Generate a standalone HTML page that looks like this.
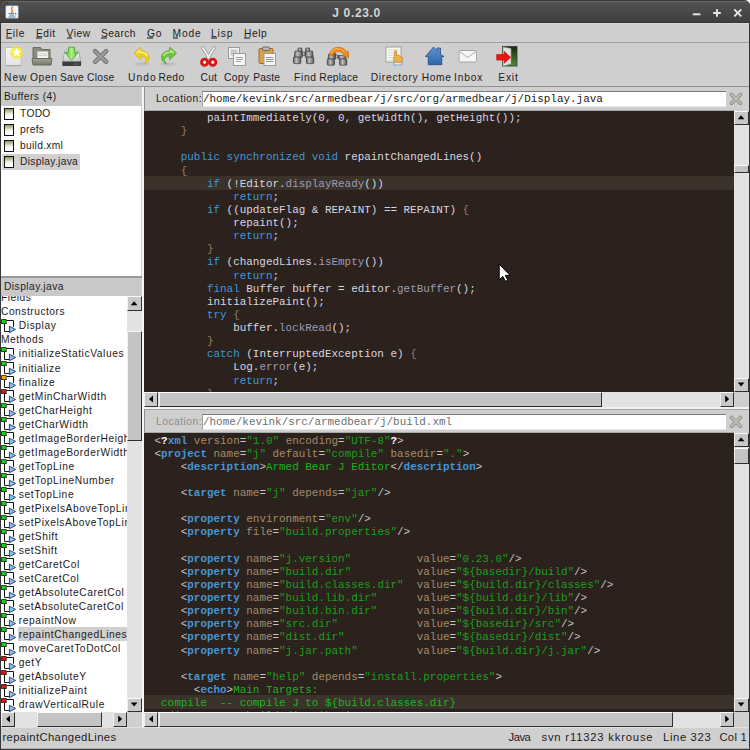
<!DOCTYPE html><html><head><meta charset="utf-8"><style>
*{margin:0;padding:0;box-sizing:border-box}
html,body{width:750px;height:750px;overflow:hidden;background:#fff}
.a{position:absolute}
.ui{font-family:'Liberation Sans',sans-serif; font-size:10.25px;color:#1e1a22;white-space:nowrap;line-height:1}
.cl{position:absolute;left:0;font-family:'Liberation Mono',monospace; font-size:10.9375px;line-height:13.125px;white-space:pre;height:13.125px}
</style></head><body>
<div class="a" style="left:0;top:0;width:750px;height:750px;background:#383838;border-radius:0 6px 0 0"></div><div class="a" style="left:0;top:0;width:750px;height:23px;background:linear-gradient(#3a3a3a 0,#3a3a3a 1px,#6a6a6a 1px,#6a6a6a 2px,#525252 2px,#3f3f3f 22px,#353535 22px);border-radius:0 6px 0 0"></div><div class="a" style="left:0px;top:0px;width:8px;height:8px;background:#454545;"></div><svg class="a" style="left:0;top:0" width="10" height="10"><path d="M0 0h10v1h-10z" fill="#3a3a3a"/><path d="M2.3 6.5Q2.6 1.6 6.5 1.6H10" stroke="#626262" stroke-width="1" fill="none"/></svg><div class="a ui" style="left:332.3px;top:7px;letter-spacing:0.65px;font-size:12px;font-weight:bold;color:#d4d4d4">J 0.23.0</div><svg class="a" style="left:4px;top:4px" width="16" height="16"><rect x="1.5" y="1.5" width="13" height="13" rx="1.5" fill="#f6f6f6" stroke="#6f8aa0" stroke-width="1"/><path d="M8.6 3c-1.8 1.2-1 2.4-.3 3.2.5.7.2 1.4-.6 2" stroke="#e8801c" stroke-width="1.5" fill="none" stroke-linecap="round"/><path d="M4.5 9.5h6M5.5 11.2h4.5M4.5 13h7" stroke="#5684aa" stroke-width="1"/><path d="M11 9c1.5 0 1.5 2 0 2.2" stroke="#5684aa" stroke-width="0.9" fill="none"/></svg><svg class="a" style="left:688px;top:5px" width="60" height="16"><path d="M4.8 9.3h7.6" stroke="#e8e8e8" stroke-width="1.9"/><path d="M29 4.2v7.6M25.2 8h7.6" stroke="#e8e8e8" stroke-width="1.9"/><path d="M46.3 4.3l7 7M53.3 4.3l-7 7" stroke="#e8e8e8" stroke-width="1.9"/></svg><div class="a" style="left:1px;top:23px;width:748px;height:726px;background:#cfcfcf;"></div><div class="a" style="left:1px;top:23px;width:748px;height:1px;background:#dadada;"></div><div class="a ui" style="left:5.8px;top:28.8px;letter-spacing:0.73px;">File</div><div class="a" style="left:6.1px;top:37.4px;width:5.5px;height:1.4px;background:#707070;"></div><div class="a ui" style="left:36px;top:28.8px;letter-spacing:0.45px;">Edit</div><div class="a" style="left:36.3px;top:37.4px;width:5.5px;height:1.4px;background:#707070;"></div><div class="a ui" style="left:66.6px;top:28.8px;letter-spacing:0.47px;">View</div><div class="a" style="left:66.9px;top:37.4px;width:5.5px;height:1.4px;background:#707070;"></div><div class="a ui" style="left:101px;top:28.8px;letter-spacing:0.4px;">Search</div><div class="a" style="left:101.3px;top:37.4px;width:5.5px;height:1.4px;background:#707070;"></div><div class="a ui" style="left:147px;top:28.8px;letter-spacing:0.9px;">Go</div><div class="a" style="left:147.3px;top:37.4px;width:5.5px;height:1.4px;background:#707070;"></div><div class="a ui" style="left:172.6px;top:28.8px;letter-spacing:0.8px;">Mode</div><div class="a" style="left:172.9px;top:37.4px;width:5.5px;height:1.4px;background:#707070;"></div><div class="a ui" style="left:211px;top:28.8px;letter-spacing:0.9px;">Lisp</div><div class="a" style="left:211.3px;top:37.4px;width:5.5px;height:1.4px;background:#707070;"></div><div class="a ui" style="left:244px;top:28.8px;letter-spacing:0.53px;">Help</div><div class="a" style="left:244.3px;top:37.4px;width:5.5px;height:1.4px;background:#707070;"></div><div class="a" style="left:1px;top:42px;width:748px;height:1px;background:#a2a2a2;"></div>
<svg class="a" style="left:0;top:0" width="530" height="70" viewBox="0 0 530 70">
<defs>
<radialGradient id="glow" cx="0.5" cy="0.5" r="0.5"><stop offset="0.4" stop-color="#fff020"/><stop offset="0.65" stop-color="#f4e830" stop-opacity="0.85"/><stop offset="1" stop-color="#f2e640" stop-opacity="0"/></radialGradient>
<linearGradient id="page" x1="0" y1="0" x2="0" y2="1"><stop offset="0" stop-color="#f6f6f6"/><stop offset="1" stop-color="#e4e4e4"/></linearGradient>
<linearGradient id="fold" x1="0" y1="0" x2="0" y2="1"><stop offset="0" stop-color="#a4a494"/><stop offset="1" stop-color="#76766a"/></linearGradient>
<linearGradient id="drive" x1="0" y1="0" x2="0" y2="1"><stop offset="0" stop-color="#f4f4f4"/><stop offset="1" stop-color="#c8c8c8"/></linearGradient>
<linearGradient id="grn" x1="0" y1="0" x2="1" y2="0"><stop offset="0" stop-color="#4cb82c"/><stop offset="0.5" stop-color="#b6ee8c"/><stop offset="1" stop-color="#4cb82c"/></linearGradient>
<linearGradient id="door" x1="0" y1="0" x2="0" y2="1"><stop offset="0" stop-color="#1a2a14"/><stop offset="1" stop-color="#4f8a34"/></linearGradient>
<linearGradient id="house" x1="0" y1="0" x2="0" y2="1"><stop offset="0" stop-color="#5f94d4"/><stop offset="1" stop-color="#2f64ac"/></linearGradient>
<linearGradient id="bino" x1="0" y1="0" x2="1" y2="0"><stop offset="0" stop-color="#606060"/><stop offset="0.4" stop-color="#c0c0bc"/><stop offset="1" stop-color="#555"/></linearGradient>
</defs>
<!-- New -->
<rect x="5.5" y="47.5" width="15.5" height="18" fill="url(#page)" stroke="#c0c0c0" stroke-width="1"/><path d="M5.5 65.8h15.5" stroke="#9c9c9c" stroke-width="0.8"/>
<circle cx="16.6" cy="52.6" r="7.5" fill="url(#glow)"/>
<path d="M16.60 48.30 L17.78 50.98 L20.69 51.27 L18.50 53.22 L19.13 56.08 L16.60 54.60 L14.07 56.08 L14.70 53.22 L12.51 51.27 L15.42 50.98z" fill="#fff" stroke="#fff" stroke-width="0.6" stroke-linejoin="round"/>
<!-- Open -->
<path d="M33 47.5h7.5l1.5 2h8v10h-17z" fill="#8c8c7e" stroke="#6a6a5e" stroke-width="1"/>
<rect x="37.5" y="51.5" width="10.5" height="7" fill="#f4f4f0" stroke="#c8c8c0" stroke-width="0.6"/>
<path d="M38.5 53.8h8.5M38.5 55.6h8.5" stroke="#c4c4bc" stroke-width="0.8"/>
<path d="M32 58.5h20l-1 6.5h-18z" fill="url(#fold)" stroke="#6a6a5e" stroke-width="1" stroke-linejoin="round"/>
<!-- Save -->
<path d="M62.6 61.5l2.2-10.5h13.8l2.2 10.5z" fill="url(#drive)" stroke="#a0a0a0" stroke-width="0.8"/>
<rect x="62.3" y="61.3" width="18.8" height="4.7" rx="1" fill="#3a3e3e"/><path d="M63 61.6h17.4" stroke="#8a8e8e" stroke-width="0.7"/>
<path d="M74 64h5" stroke="#777" stroke-width="0.8"/>
<path d="M68.4 47.2h6.2v5.4h3.6l-6.7 7.6-6.7-7.6h3.6z" fill="url(#grn)" stroke="#46a820" stroke-width="0.8" stroke-linejoin="round"/>
<!-- Close -->
<path d="M95 51.2l11.2 10.6M106.2 51.2l-11.2 10.6" stroke="#6e6e6e" stroke-width="4.4" stroke-linecap="round"/>
<path d="M95 51.2l11.2 10.6M106.2 51.2l-11.2 10.6" stroke="#999997" stroke-width="2.7" stroke-linecap="round"/>
<!-- Undo -->
<ellipse cx="142" cy="64" rx="8" ry="1.8" fill="#000" opacity="0.08"/>
<path d="M134 53.2l6.8-6v3.6c4.5 0 8.2 2.6 8.2 6.6 0 3.2-2.4 5.4-5 6.4 1.4-1.6 2-3 2-4.2 0-2.2-2.2-3.6-5.2-3.6v3.8z" fill="#f0d21c" stroke="#d4b010" stroke-width="0.8" stroke-linejoin="round"/>
<path d="M136.5 53.2l3.3-2.8v1.8c3 0 6.5 1.2 7.2 4" stroke="#fff4a0" stroke-width="1.2" fill="none"/>
<!-- Redo -->
<ellipse cx="168" cy="64" rx="8" ry="1.8" fill="#000" opacity="0.08"/>
<path d="M176.5 53.2l-6.8-6v3.6c-4.5 0-8.2 2.6-8.2 6.6 0 3.2 2.4 5.4 5 6.4-1.4-1.6-2-3-2-4.2 0-2.2 2.2-3.6 5.2-3.6v3.8z" fill="#6cc838" stroke="#4aa820" stroke-width="0.8" stroke-linejoin="round"/>
<path d="M174 53.2l-3.3-2.8v1.8c-3 0-6.5 1.2-7.2 4" stroke="#c4f0a0" stroke-width="1.2" fill="none"/>
<!-- Cut -->
<path d="M202.8 47.8l6.3 10M214.2 47.8l-6.3 10" stroke="#8e8e8e" stroke-width="3.2" stroke-linecap="round"/>
<path d="M202.8 47.8l6.3 10M214.2 47.8l-6.3 10" stroke="#f4f4f4" stroke-width="1.8" stroke-linecap="round"/>
<circle cx="204.6" cy="62.2" r="3.1" fill="none" stroke="#d41a1a" stroke-width="2.8"/>
<circle cx="212.8" cy="62.2" r="3.1" fill="none" stroke="#d41a1a" stroke-width="2.8"/>
<circle cx="204.6" cy="62.2" r="1" fill="#fff"/>
<circle cx="212.8" cy="62.2" r="1" fill="#fff"/>
<!-- Copy -->
<rect x="228.5" y="47.5" width="11" height="11" fill="#f4f4f4" stroke="#9a9a9a" stroke-width="1"/>
<rect x="230.5" y="49.5" width="7" height="6" fill="#c8c8c8"/>
<rect x="233.5" y="53.5" width="12" height="12" fill="#f6f6f6" stroke="#9a9a9a" stroke-width="1"/>
<path d="M236 57.5h7M236 59.5h7M236 61.5h5" stroke="#9a9a9a" stroke-width="0.9"/>
<!-- Paste -->
<rect x="259" y="48.5" width="14" height="15" rx="1" fill="#dca04c" stroke="#a06c28" stroke-width="1"/>
<rect x="262.5" y="47" width="7" height="3.5" rx="1" fill="#b8b8b8" stroke="#555" stroke-width="0.8"/>
<rect x="264" y="53.5" width="11.5" height="12" fill="#f6f6f6" stroke="#9a9a9a" stroke-width="1"/>
<path d="M266 57.5h7.5M266 59.5h7.5M266 61.5h7.5" stroke="#8a8a8a" stroke-width="0.9"/>
<!-- Find -->
<g fill="url(#bino)" stroke="#3a3a3a" stroke-width="0.7" stroke-linejoin="round">
<rect x="298" y="48" width="3.9" height="3.4" rx="0.6"/><rect x="305.7" y="48" width="3.9" height="3.4" rx="0.6"/>
<path d="M295 51.2h7.3v6h-8z"/><path d="M305.3 51.2h7.3l.5 6h-7.8z"/>
<circle cx="303.8" cy="53.8" r="1.8"/>
<rect x="293.4" y="57.2" width="7.4" height="6.4" rx="1"/><rect x="306.4" y="57.2" width="7.4" height="6.4" rx="1"/>
</g>
<!-- Replace -->
<g fill="url(#bino)" stroke="#3a3a3a" stroke-width="0.7" stroke-linejoin="round">
<rect x="331.5" y="51.5" width="3.6" height="3" rx="0.6"/>
<path d="M328.6 54.2h6.8v5h-7.4z"/><path d="M338.6 55.5h6.8l.4 3.7h-7.2z"/>
<circle cx="336.8" cy="56.4" r="1.6"/>
<rect x="327.3" y="59" width="7.2" height="6.2" rx="1"/><rect x="339.6" y="59" width="7.2" height="6.2" rx="1"/>
</g>
<path d="M329.5 55c.8-5.5 5.5-8.5 10.5-7.6 3.2.5 5.4 2.4 6.6 4.6l1.6-1.1.4 6.9-6.4-2.4 1.7-1c-1-1.5-2.6-2.5-4.5-2.8-3.6-.5-6.4 1.5-7.1 4.3z" fill="#f28a1a" stroke="#c8680c" stroke-width="0.7" stroke-linejoin="round"/>
<path d="M331 53.2c1.2-3 4-4.6 7.6-4.4 2.6.2 4.8 1.6 6 3.4" stroke="#ffc070" stroke-width="0.9" fill="none"/>
<!-- Directory -->
<rect x="386" y="47" width="15" height="15" fill="#f8f8f4" stroke="#9a9a94" stroke-width="0.9"/>
<path d="M388 50h11M388 52.5h11M388 55h11M388 57.5h11M388 60h11" stroke="#d4d4cc" stroke-width="0.9"/>
<rect x="394" y="61.5" width="8" height="3.5" fill="#d8e8f8" stroke="#6a9ad0" stroke-width="0.8"/>
<path d="M394 62c-.5-2-.5-4 .5-5.5v-5c0-1.2 2-1.2 2 0v4c1.5-.6 3-.5 4 .5 1 .5 2 1 2 3 0 1.5-.3 2.5-1 3.5z" fill="#ecb050" stroke="#c88a2c" stroke-width="0.8"/>
<!-- Home -->
<path d="M425.5 56.5l8-9.5 3.5 4v-3h3.5v6.5l3.5 2h-2.2v8.2h-13.6v-8.2z" fill="url(#house)" stroke="#264e86" stroke-width="0.8" stroke-linejoin="round"/>
<!-- Inbox -->
<rect x="459" y="50.5" width="17.5" height="11.5" rx="1" fill="#f6f6f4" stroke="#a4a4a0" stroke-width="1"/>
<path d="M459.5 51.5l8.2 6 8.2-6" stroke="#a4a4a0" stroke-width="0.9" fill="none"/>
<!-- Exit -->
<rect x="502.5" y="46.5" width="14.5" height="19.5" fill="url(#door)" stroke="#2c3a28" stroke-width="0.8"/>
<path d="M503 47l8 1.5v15.5l-8 2z" fill="#e0e0dc" stroke="#9a9a94" stroke-width="0.6"/>
<path d="M496.7 54.5h7.5v-3.2l6.5 6-6.5 6v-3.2h-7.5z" fill="#f01414" stroke="#b80a0a" stroke-width="0.6" stroke-linejoin="round"/>
</svg>
<div class="a ui" style="left:4px;top:73.3px;letter-spacing:1px;">New</div><div class="a ui" style="left:30px;top:73.3px;letter-spacing:0.63px;">Open</div><div class="a ui" style="left:60px;top:73.3px;letter-spacing:0.1px;">Save</div><div class="a ui" style="left:87px;top:73.3px;letter-spacing:0.25px;">Close</div><div class="a ui" style="left:128px;top:73.3px;letter-spacing:1.1px;">Undo</div><div class="a ui" style="left:158.5px;top:73.3px;letter-spacing:0.37px;">Redo</div><div class="a ui" style="left:200.5px;top:73.3px;letter-spacing:0.25px;">Cut</div><div class="a ui" style="left:224px;top:73.3px;letter-spacing:0.3px;">Copy</div><div class="a ui" style="left:253.3px;top:73.3px;letter-spacing:0.1px;">Paste</div><div class="a ui" style="left:294px;top:73.3px;letter-spacing:0.7px;">Find</div><div class="a ui" style="left:319.3px;top:73.3px;letter-spacing:0.18px;">Replace</div><div class="a ui" style="left:370.7px;top:73.3px;letter-spacing:0.75px;">Directory</div><div class="a ui" style="left:421.7px;top:73.3px;letter-spacing:0.6px;">Home</div><div class="a ui" style="left:454px;top:73.3px;letter-spacing:0.83px;">Inbox</div><div class="a ui" style="left:498.3px;top:73.3px;letter-spacing:0.8px;">Exit</div><div class="a" style="left:1px;top:86px;width:748px;height:1px;background:#929292;"></div><div class="a" style="left:1px;top:87px;width:140px;height:19px;background:#c9c9c9;"></div><div class="a ui" style="left:4px;top:92px;letter-spacing:0.45px;">Buffers (4)</div><div class="a" style="left:1px;top:106px;width:140px;height:170px;background:#fff;"></div><div class="a" style="left:4px;top:108px;width:10px;height:12px;border:1px solid #111;background:linear-gradient(#96965a,#e8e8d4 45%,#fff 70%)"></div><div class="a ui" style="left:20px;top:109px;letter-spacing:0.3px;">TODO</div><div class="a" style="left:4px;top:124px;width:10px;height:12px;border:1px solid #111;background:linear-gradient(#96965a,#e8e8d4 45%,#fff 70%)"></div><div class="a ui" style="left:20px;top:125px;letter-spacing:0.3px;">prefs</div><div class="a" style="left:4px;top:140px;width:10px;height:12px;border:1px solid #111;background:linear-gradient(#96965a,#e8e8d4 45%,#fff 70%)"></div><div class="a ui" style="left:20px;top:141px;letter-spacing:0.3px;">build.xml</div><div class="a" style="left:2px;top:154px;width:78px;height:16px;background:#d0d0d0;"></div><div class="a" style="left:4px;top:156px;width:10px;height:12px;border:1px solid #111;background:linear-gradient(#96965a,#e8e8d4 45%,#fff 70%)"></div><div class="a ui" style="left:20px;top:157px;letter-spacing:0.3px;">Display.java</div><div class="a" style="left:1px;top:276px;width:141px;height:2px;background:#9a9a9a;"></div><div class="a" style="left:1px;top:278px;width:140px;height:18px;background:#c9c9c9;"></div><div class="a ui" style="left:4px;top:282px;letter-spacing:0.45px;">Display.java</div><div class="a" style="left:1px;top:296px;width:126px;height:416px;background:#fff;overflow:hidden"><div class="a ui" style="left:0px;top:-2.7px;letter-spacing:0.5px;">Fields</div><div class="a ui" style="left:0px;top:11.34px;letter-spacing:0.5px;">Constructors</div><svg class="a" style="left:-0.5px;top:22.58px" width="16" height="16"><path d="M5.5 1.5h7v6.3M3.5 4.5v8h5" stroke="#111" stroke-width="1" fill="none"/><rect x="0.6" y="0.6" width="4.6" height="4" fill="#19d019" stroke="#1a1a1a" stroke-width="0.8"/><path d="M8.4 7.2l6.2 3.2-6.2 3.4z" fill="#8fbbe6" stroke="#1e3e66" stroke-width="0.9" stroke-linejoin="round"/></svg><div class="a ui" style="left:17.8px;top:25.38px;letter-spacing:0.58px;">Display</div><div class="a ui" style="left:0px;top:39.42px;letter-spacing:0.5px;">Methods</div><svg class="a" style="left:-0.5px;top:50.66px" width="16" height="16"><path d="M5.5 1.5h7v6.3M3.5 4.5v8h5" stroke="#111" stroke-width="1" fill="none"/><rect x="0.6" y="0.6" width="4.6" height="4" fill="#19d019" stroke="#1a1a1a" stroke-width="0.8"/><path d="M8.4 7.2l6.2 3.2-6.2 3.4z" fill="#8fbbe6" stroke="#1e3e66" stroke-width="0.9" stroke-linejoin="round"/></svg><div class="a ui" style="left:17.8px;top:53.46px;letter-spacing:0.58px;">initializeStaticValues</div><svg class="a" style="left:-0.5px;top:64.70px" width="16" height="16"><path d="M5.5 1.5h7v6.3M3.5 4.5v8h5" stroke="#111" stroke-width="1" fill="none"/><rect x="0.6" y="0.6" width="4.6" height="4" fill="#19d019" stroke="#1a1a1a" stroke-width="0.8"/><path d="M8.4 7.2l6.2 3.2-6.2 3.4z" fill="#8fbbe6" stroke="#1e3e66" stroke-width="0.9" stroke-linejoin="round"/></svg><div class="a ui" style="left:17.8px;top:67.5px;letter-spacing:0.58px;">initialize</div><svg class="a" style="left:-0.5px;top:78.74px" width="16" height="16"><path d="M5.5 1.5h7v6.3M3.5 4.5v8h5" stroke="#111" stroke-width="1" fill="none"/><rect x="0.6" y="0.6" width="4.6" height="4" fill="#f0a818" stroke="#1a1a1a" stroke-width="0.8"/><path d="M8.4 7.2l6.2 3.2-6.2 3.4z" fill="#8fbbe6" stroke="#1e3e66" stroke-width="0.9" stroke-linejoin="round"/></svg><div class="a ui" style="left:17.8px;top:81.54px;letter-spacing:0.58px;">finalize</div><svg class="a" style="left:-0.5px;top:92.78px" width="16" height="16"><path d="M5.5 1.5h7v6.3M3.5 4.5v8h5" stroke="#111" stroke-width="1" fill="none"/><rect x="0.6" y="0.6" width="4.6" height="4" fill="#e41010" stroke="#1a1a1a" stroke-width="0.8"/><path d="M8.4 7.2l6.2 3.2-6.2 3.4z" fill="#8fbbe6" stroke="#1e3e66" stroke-width="0.9" stroke-linejoin="round"/></svg><div class="a ui" style="left:17.8px;top:95.58px;letter-spacing:0.58px;">getMinCharWidth</div><svg class="a" style="left:-0.5px;top:106.82px" width="16" height="16"><path d="M5.5 1.5h7v6.3M3.5 4.5v8h5" stroke="#111" stroke-width="1" fill="none"/><rect x="0.6" y="0.6" width="4.6" height="4" fill="#19d019" stroke="#1a1a1a" stroke-width="0.8"/><path d="M8.4 7.2l6.2 3.2-6.2 3.4z" fill="#8fbbe6" stroke="#1e3e66" stroke-width="0.9" stroke-linejoin="round"/></svg><div class="a ui" style="left:17.8px;top:109.62px;letter-spacing:0.58px;">getCharHeight</div><svg class="a" style="left:-0.5px;top:120.86px" width="16" height="16"><path d="M5.5 1.5h7v6.3M3.5 4.5v8h5" stroke="#111" stroke-width="1" fill="none"/><rect x="0.6" y="0.6" width="4.6" height="4" fill="#19d019" stroke="#1a1a1a" stroke-width="0.8"/><path d="M8.4 7.2l6.2 3.2-6.2 3.4z" fill="#8fbbe6" stroke="#1e3e66" stroke-width="0.9" stroke-linejoin="round"/></svg><div class="a ui" style="left:17.8px;top:123.66px;letter-spacing:0.58px;">getCharWidth</div><svg class="a" style="left:-0.5px;top:134.90px" width="16" height="16"><path d="M5.5 1.5h7v6.3M3.5 4.5v8h5" stroke="#111" stroke-width="1" fill="none"/><rect x="0.6" y="0.6" width="4.6" height="4" fill="#19d019" stroke="#1a1a1a" stroke-width="0.8"/><path d="M8.4 7.2l6.2 3.2-6.2 3.4z" fill="#8fbbe6" stroke="#1e3e66" stroke-width="0.9" stroke-linejoin="round"/></svg><div class="a ui" style="left:17.8px;top:137.7px;letter-spacing:0.58px;">getImageBorderHeight</div><svg class="a" style="left:-0.5px;top:148.94px" width="16" height="16"><path d="M5.5 1.5h7v6.3M3.5 4.5v8h5" stroke="#111" stroke-width="1" fill="none"/><rect x="0.6" y="0.6" width="4.6" height="4" fill="#19d019" stroke="#1a1a1a" stroke-width="0.8"/><path d="M8.4 7.2l6.2 3.2-6.2 3.4z" fill="#8fbbe6" stroke="#1e3e66" stroke-width="0.9" stroke-linejoin="round"/></svg><div class="a ui" style="left:17.8px;top:151.74px;letter-spacing:0.58px;">getImageBorderWidth</div><svg class="a" style="left:-0.5px;top:162.98px" width="16" height="16"><path d="M5.5 1.5h7v6.3M3.5 4.5v8h5" stroke="#111" stroke-width="1" fill="none"/><rect x="0.6" y="0.6" width="4.6" height="4" fill="#19d019" stroke="#1a1a1a" stroke-width="0.8"/><path d="M8.4 7.2l6.2 3.2-6.2 3.4z" fill="#8fbbe6" stroke="#1e3e66" stroke-width="0.9" stroke-linejoin="round"/></svg><div class="a ui" style="left:17.8px;top:165.78px;letter-spacing:0.58px;">getTopLine</div><svg class="a" style="left:-0.5px;top:177.02px" width="16" height="16"><path d="M5.5 1.5h7v6.3M3.5 4.5v8h5" stroke="#111" stroke-width="1" fill="none"/><rect x="0.6" y="0.6" width="4.6" height="4" fill="#19d019" stroke="#1a1a1a" stroke-width="0.8"/><path d="M8.4 7.2l6.2 3.2-6.2 3.4z" fill="#8fbbe6" stroke="#1e3e66" stroke-width="0.9" stroke-linejoin="round"/></svg><div class="a ui" style="left:17.8px;top:179.82px;letter-spacing:0.58px;">getTopLineNumber</div><svg class="a" style="left:-0.5px;top:191.06px" width="16" height="16"><path d="M5.5 1.5h7v6.3M3.5 4.5v8h5" stroke="#111" stroke-width="1" fill="none"/><rect x="0.6" y="0.6" width="4.6" height="4" fill="#19d019" stroke="#1a1a1a" stroke-width="0.8"/><path d="M8.4 7.2l6.2 3.2-6.2 3.4z" fill="#8fbbe6" stroke="#1e3e66" stroke-width="0.9" stroke-linejoin="round"/></svg><div class="a ui" style="left:17.8px;top:193.86px;letter-spacing:0.58px;">setTopLine</div><svg class="a" style="left:-0.5px;top:205.10px" width="16" height="16"><path d="M5.5 1.5h7v6.3M3.5 4.5v8h5" stroke="#111" stroke-width="1" fill="none"/><rect x="0.6" y="0.6" width="4.6" height="4" fill="#19d019" stroke="#1a1a1a" stroke-width="0.8"/><path d="M8.4 7.2l6.2 3.2-6.2 3.4z" fill="#8fbbe6" stroke="#1e3e66" stroke-width="0.9" stroke-linejoin="round"/></svg><div class="a ui" style="left:17.8px;top:207.9px;letter-spacing:0.58px;">getPixelsAboveTopLine</div><svg class="a" style="left:-0.5px;top:219.14px" width="16" height="16"><path d="M5.5 1.5h7v6.3M3.5 4.5v8h5" stroke="#111" stroke-width="1" fill="none"/><rect x="0.6" y="0.6" width="4.6" height="4" fill="#19d019" stroke="#1a1a1a" stroke-width="0.8"/><path d="M8.4 7.2l6.2 3.2-6.2 3.4z" fill="#8fbbe6" stroke="#1e3e66" stroke-width="0.9" stroke-linejoin="round"/></svg><div class="a ui" style="left:17.8px;top:221.94px;letter-spacing:0.58px;">setPixelsAboveTopLine</div><svg class="a" style="left:-0.5px;top:233.18px" width="16" height="16"><path d="M5.5 1.5h7v6.3M3.5 4.5v8h5" stroke="#111" stroke-width="1" fill="none"/><rect x="0.6" y="0.6" width="4.6" height="4" fill="#19d019" stroke="#1a1a1a" stroke-width="0.8"/><path d="M8.4 7.2l6.2 3.2-6.2 3.4z" fill="#8fbbe6" stroke="#1e3e66" stroke-width="0.9" stroke-linejoin="round"/></svg><div class="a ui" style="left:17.8px;top:235.98px;letter-spacing:0.58px;">getShift</div><svg class="a" style="left:-0.5px;top:247.22px" width="16" height="16"><path d="M5.5 1.5h7v6.3M3.5 4.5v8h5" stroke="#111" stroke-width="1" fill="none"/><rect x="0.6" y="0.6" width="4.6" height="4" fill="#19d019" stroke="#1a1a1a" stroke-width="0.8"/><path d="M8.4 7.2l6.2 3.2-6.2 3.4z" fill="#8fbbe6" stroke="#1e3e66" stroke-width="0.9" stroke-linejoin="round"/></svg><div class="a ui" style="left:17.8px;top:250.02px;letter-spacing:0.58px;">setShift</div><svg class="a" style="left:-0.5px;top:261.26px" width="16" height="16"><path d="M5.5 1.5h7v6.3M3.5 4.5v8h5" stroke="#111" stroke-width="1" fill="none"/><rect x="0.6" y="0.6" width="4.6" height="4" fill="#19d019" stroke="#1a1a1a" stroke-width="0.8"/><path d="M8.4 7.2l6.2 3.2-6.2 3.4z" fill="#8fbbe6" stroke="#1e3e66" stroke-width="0.9" stroke-linejoin="round"/></svg><div class="a ui" style="left:17.8px;top:264.06px;letter-spacing:0.58px;">getCaretCol</div><svg class="a" style="left:-0.5px;top:275.30px" width="16" height="16"><path d="M5.5 1.5h7v6.3M3.5 4.5v8h5" stroke="#111" stroke-width="1" fill="none"/><rect x="0.6" y="0.6" width="4.6" height="4" fill="#19d019" stroke="#1a1a1a" stroke-width="0.8"/><path d="M8.4 7.2l6.2 3.2-6.2 3.4z" fill="#8fbbe6" stroke="#1e3e66" stroke-width="0.9" stroke-linejoin="round"/></svg><div class="a ui" style="left:17.8px;top:278.1px;letter-spacing:0.58px;">setCaretCol</div><svg class="a" style="left:-0.5px;top:289.34px" width="16" height="16"><path d="M5.5 1.5h7v6.3M3.5 4.5v8h5" stroke="#111" stroke-width="1" fill="none"/><rect x="0.6" y="0.6" width="4.6" height="4" fill="#19d019" stroke="#1a1a1a" stroke-width="0.8"/><path d="M8.4 7.2l6.2 3.2-6.2 3.4z" fill="#8fbbe6" stroke="#1e3e66" stroke-width="0.9" stroke-linejoin="round"/></svg><div class="a ui" style="left:17.8px;top:292.14px;letter-spacing:0.58px;">getAbsoluteCaretCol</div><svg class="a" style="left:-0.5px;top:303.38px" width="16" height="16"><path d="M5.5 1.5h7v6.3M3.5 4.5v8h5" stroke="#111" stroke-width="1" fill="none"/><rect x="0.6" y="0.6" width="4.6" height="4" fill="#19d019" stroke="#1a1a1a" stroke-width="0.8"/><path d="M8.4 7.2l6.2 3.2-6.2 3.4z" fill="#8fbbe6" stroke="#1e3e66" stroke-width="0.9" stroke-linejoin="round"/></svg><div class="a ui" style="left:17.8px;top:306.18px;letter-spacing:0.58px;">setAbsoluteCaretCol</div><svg class="a" style="left:-0.5px;top:317.42px" width="16" height="16"><path d="M5.5 1.5h7v6.3M3.5 4.5v8h5" stroke="#111" stroke-width="1" fill="none"/><rect x="0.6" y="0.6" width="4.6" height="4" fill="#19d019" stroke="#1a1a1a" stroke-width="0.8"/><path d="M8.4 7.2l6.2 3.2-6.2 3.4z" fill="#8fbbe6" stroke="#1e3e66" stroke-width="0.9" stroke-linejoin="round"/></svg><div class="a ui" style="left:17.8px;top:320.22px;letter-spacing:0.58px;">repaintNow</div><div class="a" style="left:17px;top:331px;width:110px;height:14px;background:#d0d0d0;"></div><svg class="a" style="left:-0.5px;top:331.46px" width="16" height="16"><path d="M5.5 1.5h7v6.3M3.5 4.5v8h5" stroke="#111" stroke-width="1" fill="none"/><rect x="0.6" y="0.6" width="4.6" height="4" fill="#19d019" stroke="#1a1a1a" stroke-width="0.8"/><path d="M8.4 7.2l6.2 3.2-6.2 3.4z" fill="#8fbbe6" stroke="#1e3e66" stroke-width="0.9" stroke-linejoin="round"/></svg><div class="a ui" style="left:17.8px;top:334.26px;letter-spacing:0.58px;">repaintChangedLines</div><svg class="a" style="left:-0.5px;top:345.50px" width="16" height="16"><path d="M5.5 1.5h7v6.3M3.5 4.5v8h5" stroke="#111" stroke-width="1" fill="none"/><rect x="0.6" y="0.6" width="4.6" height="4" fill="#19d019" stroke="#1a1a1a" stroke-width="0.8"/><path d="M8.4 7.2l6.2 3.2-6.2 3.4z" fill="#8fbbe6" stroke="#1e3e66" stroke-width="0.9" stroke-linejoin="round"/></svg><div class="a ui" style="left:17.8px;top:348.3px;letter-spacing:0.58px;">moveCaretToDotCol</div><svg class="a" style="left:-0.5px;top:359.54px" width="16" height="16"><path d="M5.5 1.5h7v6.3M3.5 4.5v8h5" stroke="#111" stroke-width="1" fill="none"/><rect x="0.6" y="0.6" width="4.6" height="4" fill="#e41010" stroke="#1a1a1a" stroke-width="0.8"/><path d="M8.4 7.2l6.2 3.2-6.2 3.4z" fill="#8fbbe6" stroke="#1e3e66" stroke-width="0.9" stroke-linejoin="round"/></svg><div class="a ui" style="left:17.8px;top:362.34px;letter-spacing:0.58px;">getY</div><svg class="a" style="left:-0.5px;top:373.58px" width="16" height="16"><path d="M5.5 1.5h7v6.3M3.5 4.5v8h5" stroke="#111" stroke-width="1" fill="none"/><rect x="0.6" y="0.6" width="4.6" height="4" fill="#e41010" stroke="#1a1a1a" stroke-width="0.8"/><path d="M8.4 7.2l6.2 3.2-6.2 3.4z" fill="#8fbbe6" stroke="#1e3e66" stroke-width="0.9" stroke-linejoin="round"/></svg><div class="a ui" style="left:17.8px;top:376.38px;letter-spacing:0.58px;">getAbsoluteY</div><svg class="a" style="left:-0.5px;top:387.62px" width="16" height="16"><path d="M5.5 1.5h7v6.3M3.5 4.5v8h5" stroke="#111" stroke-width="1" fill="none"/><rect x="0.6" y="0.6" width="4.6" height="4" fill="#e41010" stroke="#1a1a1a" stroke-width="0.8"/><path d="M8.4 7.2l6.2 3.2-6.2 3.4z" fill="#8fbbe6" stroke="#1e3e66" stroke-width="0.9" stroke-linejoin="round"/></svg><div class="a ui" style="left:17.8px;top:390.42px;letter-spacing:0.58px;">initializePaint</div><svg class="a" style="left:-0.5px;top:401.66px" width="16" height="16"><path d="M5.5 1.5h7v6.3M3.5 4.5v8h5" stroke="#111" stroke-width="1" fill="none"/><rect x="0.6" y="0.6" width="4.6" height="4" fill="#e41010" stroke="#1a1a1a" stroke-width="0.8"/><path d="M8.4 7.2l6.2 3.2-6.2 3.4z" fill="#8fbbe6" stroke="#1e3e66" stroke-width="0.9" stroke-linejoin="round"/></svg><div class="a ui" style="left:17.8px;top:404.46px;letter-spacing:0.58px;">drawVerticalRule</div></div><div class="a" style="left:127px;top:296px;width:15px;height:416px;background:#e2e2e2;"></div><div class="a" style="left:127px;top:296px;width:15px;height:15px;background:#c8c8c8;border-top:1px solid #f8f8f8;border-left:1px solid #f0f0f0;border-right:1px solid #2e2e2e;border-bottom:1px solid #2e2e2e"></div><svg class="a" style="left:127px;top:296.6px" width="15" height="15"><path d="M3.8 8.2h6.6l-3.3-4z" fill="#000"/></svg><div class="a" style="left:127px;top:698px;width:15px;height:14px;background:#c8c8c8;border-top:1px solid #f8f8f8;border-left:1px solid #f0f0f0;border-right:1px solid #2e2e2e;border-bottom:1px solid #2e2e2e"></div><svg class="a" style="left:127px;top:698px" width="15" height="15"><path d="M3.8 4.4h6.6l-3.3 4z" fill="#000"/></svg><div class="a" style="left:127px;top:331px;width:15px;height:110px;background:#c4c4c4;border-top:1px solid #f8f8f8;border-left:1px solid #f0f0f0;border-right:1px solid #2e2e2e;border-bottom:1px solid #2e2e2e"></div><div class="a" style="left:1px;top:712px;width:126px;height:15px;background:#e2e2e2;"></div><div class="a" style="left:1px;top:712px;width:14px;height:15px;background:#c8c8c8;border-top:1px solid #f8f8f8;border-left:1px solid #f0f0f0;border-right:1px solid #2e2e2e;border-bottom:1px solid #2e2e2e"></div><svg class="a" style="left:1px;top:712px" width="15" height="15"><path d="M9 3.6v6.8l-4-3.4z" fill="#000"/></svg><div class="a" style="left:113px;top:712px;width:14px;height:15px;background:#c8c8c8;border-top:1px solid #f8f8f8;border-left:1px solid #f0f0f0;border-right:1px solid #2e2e2e;border-bottom:1px solid #2e2e2e"></div><svg class="a" style="left:113px;top:712px" width="15" height="15"><path d="M5.2 3.6v6.8l4-3.4z" fill="#000"/></svg><div class="a" style="left:37px;top:712px;width:65px;height:15px;background:#c4c4c4;border-top:1px solid #f8f8f8;border-left:1px solid #f0f0f0;border-right:1px solid #2e2e2e;border-bottom:1px solid #2e2e2e"></div><div class="a" style="left:127px;top:712px;width:15px;height:15px;background:#cfcfcf;"></div><div class="a" style="left:142px;top:87px;width:1.5px;height:640px;background:#f4f4f4;"></div><div class="a" style="left:143.5px;top:87px;width:0.5px;height:640px;background:#909090;"></div><div class="a ui" style="left:156px;top:94px;letter-spacing:0.5px;">Location:</div><div class="a" style="left:202px;top:91px;width:524px;height:16px;background:#fff;border-top:1px solid #7a7a7a;border-left:1px solid #a0a0a0;border-bottom:1px solid #e8e8e8"></div><div class="a" style="left:203px;top:92px;font-family:'Liberation Mono',monospace; font-size:10.9375px;line-height:14px;color:#1a1a1a;white-space:pre">/home/kevink/src/armedbear/j/src/org/armedbear/j/Display.java</div><svg class="a" style="left:729px;top:92px" width="15" height="14"><path d="M2.6 2.4l8.8 8.8M11.4 2.4l-8.8 8.8" stroke="#8a8a84" stroke-width="3.6" stroke-linecap="round"/><path d="M2.6 2.4l8.8 8.8M11.4 2.4l-8.8 8.8" stroke="#c2c2ba" stroke-width="1.9" stroke-linecap="round"/></svg><div class="a" style="left:144px;top:110px;width:590px;height:1px;background:#a8a8a8;"></div><div class="a" style="left:144px;top:111px;width:590px;height:281px;background:#2b211d;overflow:hidden"><div class="a" style="left:0px;top:64.925px;width:590px;height:13.6px;background:#3b322c;"></div><div class="a" style="left:10.5px;top:1px"><div class="cl" style="top:0.000px"><span style="color:#d8d6e0">        paintImmediately(0, 0, getWidth(), getHeight());</span></div><div class="cl" style="top:13.125px"><span style="color:#8f7f66">    }</span></div><div class="cl" style="top:26.250px"><span style="color:#d8d6e0"></span></div><div class="cl" style="top:39.375px"><span style="color:#d8d6e0">    </span><span style="color:#3e98da">public synchronized void</span><span style="color:#d8d6e0"> repaintChangedLines()</span></div><div class="cl" style="top:52.500px"><span style="color:#8f7f66">    {</span></div><div class="cl" style="top:65.625px"><span style="color:#d8d6e0">        </span><span style="color:#3e98da">if</span><span style="color:#d8d6e0"> (!Editor.</span><span style="color:#9e9cb0">displayReady</span><span style="color:#d8d6e0">())</span></div><div class="cl" style="top:78.750px"><span style="color:#d8d6e0">            </span><span style="color:#3e98da">return</span><span style="color:#d8d6e0">;</span></div><div class="cl" style="top:91.875px"><span style="color:#d8d6e0">        </span><span style="color:#3e98da">if</span><span style="color:#d8d6e0"> ((updateFlag &amp; REPAINT) == REPAINT) </span><span style="color:#8f7f66">{</span></div><div class="cl" style="top:105.000px"><span style="color:#d8d6e0">            repaint();</span></div><div class="cl" style="top:118.125px"><span style="color:#d8d6e0">            </span><span style="color:#3e98da">return</span><span style="color:#d8d6e0">;</span></div><div class="cl" style="top:131.250px"><span style="color:#8f7f66">        }</span></div><div class="cl" style="top:144.375px"><span style="color:#d8d6e0">        </span><span style="color:#3e98da">if</span><span style="color:#d8d6e0"> (changedLines.</span><span style="color:#9e9cb0">isEmpty</span><span style="color:#d8d6e0">())</span></div><div class="cl" style="top:157.500px"><span style="color:#d8d6e0">            </span><span style="color:#3e98da">return</span><span style="color:#d8d6e0">;</span></div><div class="cl" style="top:170.625px"><span style="color:#d8d6e0">        </span><span style="color:#3e98da">final</span><span style="color:#d8d6e0"> Buffer buffer = editor.</span><span style="color:#9e9cb0">getBuffer</span><span style="color:#d8d6e0">();</span></div><div class="cl" style="top:183.750px"><span style="color:#d8d6e0">        initializePaint();</span></div><div class="cl" style="top:196.875px"><span style="color:#d8d6e0">        </span><span style="color:#3e98da">try</span><span style="color:#d8d6e0"> </span><span style="color:#8f7f66">{</span></div><div class="cl" style="top:210.000px"><span style="color:#d8d6e0">            buffer.</span><span style="color:#9e9cb0">lockRead</span><span style="color:#d8d6e0">();</span></div><div class="cl" style="top:223.125px"><span style="color:#8f7f66">        }</span></div><div class="cl" style="top:236.250px"><span style="color:#d8d6e0">        </span><span style="color:#3e98da">catch</span><span style="color:#d8d6e0"> (InterruptedException e) </span><span style="color:#8f7f66">{</span></div><div class="cl" style="top:249.375px"><span style="color:#d8d6e0">            Log.</span><span style="color:#9e9cb0">error</span><span style="color:#d8d6e0">(e);</span></div><div class="cl" style="top:262.500px"><span style="color:#d8d6e0">            </span><span style="color:#3e98da">return</span><span style="color:#d8d6e0">;</span></div><div class="cl" style="top:275.625px"><span style="color:#8f7f66">        }</span></div></div></div><svg class="a" style="left:497px;top:262px" width="16" height="22"><path d="M2.2 2.2v15.6l3.6-3.4 2.6 4.9 2.4-1.1-2.5-4.8h4.9z" fill="#fff" stroke="#000" stroke-width="1" stroke-linejoin="round"/></svg><div class="a" style="left:734px;top:111px;width:15px;height:281px;background:#e2e2e2;"></div><div class="a" style="left:734px;top:111px;width:15px;height:14px;background:#c8c8c8;border-top:1px solid #f8f8f8;border-left:1px solid #f0f0f0;border-right:1px solid #2e2e2e;border-bottom:1px solid #2e2e2e"></div><svg class="a" style="left:734px;top:111px" width="15" height="15"><path d="M3.8 8.2h6.6l-3.3-4z" fill="#000"/></svg><div class="a" style="left:734px;top:378px;width:15px;height:14px;background:#c8c8c8;border-top:1px solid #f8f8f8;border-left:1px solid #f0f0f0;border-right:1px solid #2e2e2e;border-bottom:1px solid #2e2e2e"></div><svg class="a" style="left:734px;top:378px" width="15" height="15"><path d="M3.8 4.4h6.6l-3.3 4z" fill="#000"/></svg><div class="a" style="left:734px;top:165px;width:15px;height:8px;background:#c4c4c4;border-top:1px solid #f8f8f8;border-left:1px solid #f0f0f0;border-right:1px solid #2e2e2e;border-bottom:1px solid #2e2e2e"></div><div class="a" style="left:144px;top:392px;width:590px;height:15px;background:#e2e2e2;"></div><div class="a" style="left:144px;top:392px;width:14px;height:15px;background:#c8c8c8;border-top:1px solid #f8f8f8;border-left:1px solid #f0f0f0;border-right:1px solid #2e2e2e;border-bottom:1px solid #2e2e2e"></div><svg class="a" style="left:144px;top:392px" width="15" height="15"><path d="M9 3.6v6.8l-4-3.4z" fill="#000"/></svg><div class="a" style="left:720px;top:392px;width:14px;height:15px;background:#c8c8c8;border-top:1px solid #f8f8f8;border-left:1px solid #f0f0f0;border-right:1px solid #2e2e2e;border-bottom:1px solid #2e2e2e"></div><svg class="a" style="left:720px;top:392px" width="15" height="15"><path d="M5.2 3.6v6.8l4-3.4z" fill="#000"/></svg><div class="a" style="left:159px;top:392px;width:443px;height:15px;background:#c4c4c4;border-top:1px solid #f8f8f8;border-left:1px solid #f0f0f0;border-right:1px solid #2e2e2e;border-bottom:1px solid #2e2e2e"></div><div class="a" style="left:734px;top:392px;width:15px;height:15px;background:#cfcfcf;"></div><div class="a" style="left:144px;top:407px;width:605px;height:2px;background:#f2f2f2;"></div><div class="a" style="left:144px;top:409px;width:605px;height:1px;background:#a4a4a4;"></div><div class="a ui" style="left:156px;top:417px;letter-spacing:0.5px;color:#8c8c8c">Location:</div><div class="a" style="left:202px;top:414px;width:524px;height:16px;background:#fff;border-top:1px solid #7a7a7a;border-left:1px solid #a0a0a0;border-bottom:1px solid #e8e8e8"></div><div class="a" style="left:203px;top:415px;font-family:'Liberation Mono',monospace; font-size:10.9375px;line-height:14px;color:#6e6e6e;white-space:pre">/home/kevink/src/armedbear/j/build.xml</div><svg class="a" style="left:729px;top:415px" width="15" height="14"><path d="M2.6 2.4l8.8 8.8M11.4 2.4l-8.8 8.8" stroke="#8a8a84" stroke-width="3.6" stroke-linecap="round"/><path d="M2.6 2.4l8.8 8.8M11.4 2.4l-8.8 8.8" stroke="#c2c2ba" stroke-width="1.9" stroke-linecap="round"/></svg><div class="a" style="left:144px;top:432px;width:590px;height:1px;background:#a8a8a8;"></div><div class="a" style="left:144px;top:433px;width:590px;height:279px;background:#2b211d;overflow:hidden"><div class="a" style="left:0px;top:262.3px;width:590px;height:13.5px;background:#3b322c;"></div><div class="a" style="left:10.5px;top:1.6px"><div class="cl" style="top:0.000px"><span style="color:#c8c4c0">&lt;</span><span style="color:#ffffff;font-weight:bold">?</span><span style="color:#4596d4;font-weight:bold">xml</span><span style="color:#a48c6a"> version</span><span style="color:#c8c4c0">=</span><span style="color:#1c9e1c">&quot;1.0&quot;</span><span style="color:#a48c6a"> encoding</span><span style="color:#c8c4c0">=</span><span style="color:#1c9e1c">&quot;UTF-8&quot;</span><span style="color:#ffffff;font-weight:bold">?</span><span style="color:#c8c4c0">&gt;</span></div><div class="cl" style="top:13.125px"><span style="color:#c8c4c0">&lt;</span><span style="color:#4596d4;font-weight:bold">project</span><span style="color:#a48c6a"> name</span><span style="color:#c8c4c0">=</span><span style="color:#1c9e1c">&quot;j&quot;</span><span style="color:#a48c6a"> default</span><span style="color:#c8c4c0">=</span><span style="color:#1c9e1c">&quot;compile&quot;</span><span style="color:#a48c6a"> basedir</span><span style="color:#c8c4c0">=</span><span style="color:#1c9e1c">&quot;.&quot;</span><span style="color:#c8c4c0">&gt;</span></div><div class="cl" style="top:26.250px"><span style="color:#c8c4c0">    &lt;</span><span style="color:#4596d4;font-weight:bold">description</span><span style="color:#c8c4c0">&gt;</span><span style="color:#1fb21f">Armed Bear J Editor</span><span style="color:#c8c4c0">&lt;/</span><span style="color:#4596d4;font-weight:bold">description</span><span style="color:#c8c4c0">&gt;</span></div><div class="cl" style="top:39.375px"><span style="color:#c8c4c0"></span></div><div class="cl" style="top:52.500px"><span style="color:#c8c4c0">    &lt;</span><span style="color:#4596d4;font-weight:bold">target</span><span style="color:#a48c6a"> name</span><span style="color:#c8c4c0">=</span><span style="color:#1c9e1c">&quot;j&quot;</span><span style="color:#a48c6a"> depends</span><span style="color:#c8c4c0">=</span><span style="color:#1c9e1c">&quot;jar&quot;</span><span style="color:#c8c4c0">/&gt;</span></div><div class="cl" style="top:65.625px"><span style="color:#c8c4c0"></span></div><div class="cl" style="top:78.750px"><span style="color:#c8c4c0">    &lt;</span><span style="color:#4596d4;font-weight:bold">property</span><span style="color:#a48c6a"> environment</span><span style="color:#c8c4c0">=</span><span style="color:#1c9e1c">&quot;env&quot;</span><span style="color:#c8c4c0">/&gt;</span></div><div class="cl" style="top:91.875px"><span style="color:#c8c4c0">    &lt;</span><span style="color:#4596d4;font-weight:bold">property</span><span style="color:#a48c6a"> file</span><span style="color:#c8c4c0">=</span><span style="color:#1c9e1c">&quot;build.properties&quot;</span><span style="color:#c8c4c0">/&gt;</span></div><div class="cl" style="top:105.000px"><span style="color:#c8c4c0"></span></div><div class="cl" style="top:118.125px"><span style="color:#c8c4c0">    </span><span style="color:#c8c4c0">&lt;</span><span style="color:#4596d4;font-weight:bold">property</span><span style="color:#a48c6a"> name</span><span style="color:#c8c4c0">=</span><span style="color:#1c9e1c">&quot;j.version&quot;</span><span style="color:#c8c4c0">          </span><span style="color:#a48c6a">value</span><span style="color:#c8c4c0">=</span><span style="color:#1c9e1c">&quot;0.23.0&quot;</span><span style="color:#c8c4c0">/&gt;</span></div><div class="cl" style="top:131.250px"><span style="color:#c8c4c0">    </span><span style="color:#c8c4c0">&lt;</span><span style="color:#4596d4;font-weight:bold">property</span><span style="color:#a48c6a"> name</span><span style="color:#c8c4c0">=</span><span style="color:#1c9e1c">&quot;build.dir&quot;</span><span style="color:#c8c4c0">          </span><span style="color:#a48c6a">value</span><span style="color:#c8c4c0">=</span><span style="color:#1c9e1c">&quot;${basedir}/build&quot;</span><span style="color:#c8c4c0">/&gt;</span></div><div class="cl" style="top:144.375px"><span style="color:#c8c4c0">    </span><span style="color:#c8c4c0">&lt;</span><span style="color:#4596d4;font-weight:bold">property</span><span style="color:#a48c6a"> name</span><span style="color:#c8c4c0">=</span><span style="color:#1c9e1c">&quot;build.classes.dir&quot;</span><span style="color:#c8c4c0">  </span><span style="color:#a48c6a">value</span><span style="color:#c8c4c0">=</span><span style="color:#1c9e1c">&quot;${build.dir}/classes&quot;</span><span style="color:#c8c4c0">/&gt;</span></div><div class="cl" style="top:157.500px"><span style="color:#c8c4c0">    </span><span style="color:#c8c4c0">&lt;</span><span style="color:#4596d4;font-weight:bold">property</span><span style="color:#a48c6a"> name</span><span style="color:#c8c4c0">=</span><span style="color:#1c9e1c">&quot;build.lib.dir&quot;</span><span style="color:#c8c4c0">      </span><span style="color:#a48c6a">value</span><span style="color:#c8c4c0">=</span><span style="color:#1c9e1c">&quot;${build.dir}/lib&quot;</span><span style="color:#c8c4c0">/&gt;</span></div><div class="cl" style="top:170.625px"><span style="color:#c8c4c0">    </span><span style="color:#c8c4c0">&lt;</span><span style="color:#4596d4;font-weight:bold">property</span><span style="color:#a48c6a"> name</span><span style="color:#c8c4c0">=</span><span style="color:#1c9e1c">&quot;build.bin.dir&quot;</span><span style="color:#c8c4c0">      </span><span style="color:#a48c6a">value</span><span style="color:#c8c4c0">=</span><span style="color:#1c9e1c">&quot;${build.dir}/bin&quot;</span><span style="color:#c8c4c0">/&gt;</span></div><div class="cl" style="top:183.750px"><span style="color:#c8c4c0">    </span><span style="color:#c8c4c0">&lt;</span><span style="color:#4596d4;font-weight:bold">property</span><span style="color:#a48c6a"> name</span><span style="color:#c8c4c0">=</span><span style="color:#1c9e1c">&quot;src.dir&quot;</span><span style="color:#c8c4c0">            </span><span style="color:#a48c6a">value</span><span style="color:#c8c4c0">=</span><span style="color:#1c9e1c">&quot;${basedir}/src&quot;</span><span style="color:#c8c4c0">/&gt;</span></div><div class="cl" style="top:196.875px"><span style="color:#c8c4c0">    </span><span style="color:#c8c4c0">&lt;</span><span style="color:#4596d4;font-weight:bold">property</span><span style="color:#a48c6a"> name</span><span style="color:#c8c4c0">=</span><span style="color:#1c9e1c">&quot;dist.dir&quot;</span><span style="color:#c8c4c0">           </span><span style="color:#a48c6a">value</span><span style="color:#c8c4c0">=</span><span style="color:#1c9e1c">&quot;${basedir}/dist&quot;</span><span style="color:#c8c4c0">/&gt;</span></div><div class="cl" style="top:210.000px"><span style="color:#c8c4c0">    </span><span style="color:#c8c4c0">&lt;</span><span style="color:#4596d4;font-weight:bold">property</span><span style="color:#a48c6a"> name</span><span style="color:#c8c4c0">=</span><span style="color:#1c9e1c">&quot;j.jar.path&quot;</span><span style="color:#c8c4c0">         </span><span style="color:#a48c6a">value</span><span style="color:#c8c4c0">=</span><span style="color:#1c9e1c">&quot;${build.dir}/j.jar&quot;</span><span style="color:#c8c4c0">/&gt;</span></div><div class="cl" style="top:223.125px"><span style="color:#c8c4c0"></span></div><div class="cl" style="top:236.250px"><span style="color:#c8c4c0">    &lt;</span><span style="color:#4596d4;font-weight:bold">target</span><span style="color:#a48c6a"> name</span><span style="color:#c8c4c0">=</span><span style="color:#1c9e1c">&quot;help&quot;</span><span style="color:#a48c6a"> depends</span><span style="color:#c8c4c0">=</span><span style="color:#1c9e1c">&quot;install.properties&quot;</span><span style="color:#c8c4c0">&gt;</span></div><div class="cl" style="top:249.375px"><span style="color:#c8c4c0">      &lt;</span><span style="color:#4596d4;font-weight:bold">echo</span><span style="color:#c8c4c0">&gt;</span><span style="color:#1fb21f">Main Targets:</span></div><div class="cl" style="top:262.500px"><span style="color:#1fb21f"> compile  -- compile J to ${build.classes.dir}</span></div><div class="cl" style="top:275.625px"><span style="color:#1fb21f">  dist     -- build distribution</span></div></div></div><div class="a" style="left:734px;top:433px;width:15px;height:279px;background:#e2e2e2;"></div><div class="a" style="left:734px;top:433px;width:15px;height:14px;background:#c8c8c8;border-top:1px solid #f8f8f8;border-left:1px solid #f0f0f0;border-right:1px solid #2e2e2e;border-bottom:1px solid #2e2e2e"></div><svg class="a" style="left:734px;top:433px" width="15" height="15"><path d="M3.8 8.2h6.6l-3.3-4z" fill="#000"/></svg><div class="a" style="left:734px;top:698px;width:15px;height:14px;background:#c8c8c8;border-top:1px solid #f8f8f8;border-left:1px solid #f0f0f0;border-right:1px solid #2e2e2e;border-bottom:1px solid #2e2e2e"></div><svg class="a" style="left:734px;top:698px" width="15" height="15"><path d="M3.8 4.4h6.6l-3.3 4z" fill="#000"/></svg><div class="a" style="left:734px;top:448px;width:15px;height:16px;background:#c4c4c4;border-top:1px solid #f8f8f8;border-left:1px solid #f0f0f0;border-right:1px solid #2e2e2e;border-bottom:1px solid #2e2e2e"></div><div class="a" style="left:144px;top:712px;width:590px;height:15px;background:#e2e2e2;"></div><div class="a" style="left:144px;top:712px;width:14px;height:15px;background:#c8c8c8;border-top:1px solid #f8f8f8;border-left:1px solid #f0f0f0;border-right:1px solid #2e2e2e;border-bottom:1px solid #2e2e2e"></div><svg class="a" style="left:144px;top:712px" width="15" height="15"><path d="M9 3.6v6.8l-4-3.4z" fill="#000"/></svg><div class="a" style="left:720px;top:712px;width:14px;height:15px;background:#c8c8c8;border-top:1px solid #f8f8f8;border-left:1px solid #f0f0f0;border-right:1px solid #2e2e2e;border-bottom:1px solid #2e2e2e"></div><svg class="a" style="left:720px;top:712px" width="15" height="15"><path d="M5.2 3.6v6.8l4-3.4z" fill="#000"/></svg><div class="a" style="left:159px;top:712px;width:514px;height:15px;background:#c4c4c4;border-top:1px solid #f8f8f8;border-left:1px solid #f0f0f0;border-right:1px solid #2e2e2e;border-bottom:1px solid #2e2e2e"></div><div class="a" style="left:734px;top:712px;width:15px;height:15px;background:#cfcfcf;"></div><div class="a" style="left:1px;top:727px;width:748px;height:1px;background:#e0e0e0;"></div><div class="a ui" style="left:2.5px;top:732.3px;letter-spacing:0.37px;font-size:11.25px">repaintChangedLines</div><div class="a ui" style="left:508.5px;top:732.3px;letter-spacing:-0.5px;font-size:11.25px">Java</div><div class="a ui" style="left:541.5px;top:732.3px;letter-spacing:0.81px;font-size:11.25px">svn r11323 kkrouse</div><div class="a ui" style="left:663px;top:732.3px;letter-spacing:0.64px;font-size:11.25px">Line 323</div><div class="a ui" style="left:719.5px;top:732.3px;letter-spacing:0.25px;font-size:11.25px">Col 1</div><div class="a" style="left:1px;top:748px;width:748px;height:1px;background:#b0b0b0;"></div></body></html>
